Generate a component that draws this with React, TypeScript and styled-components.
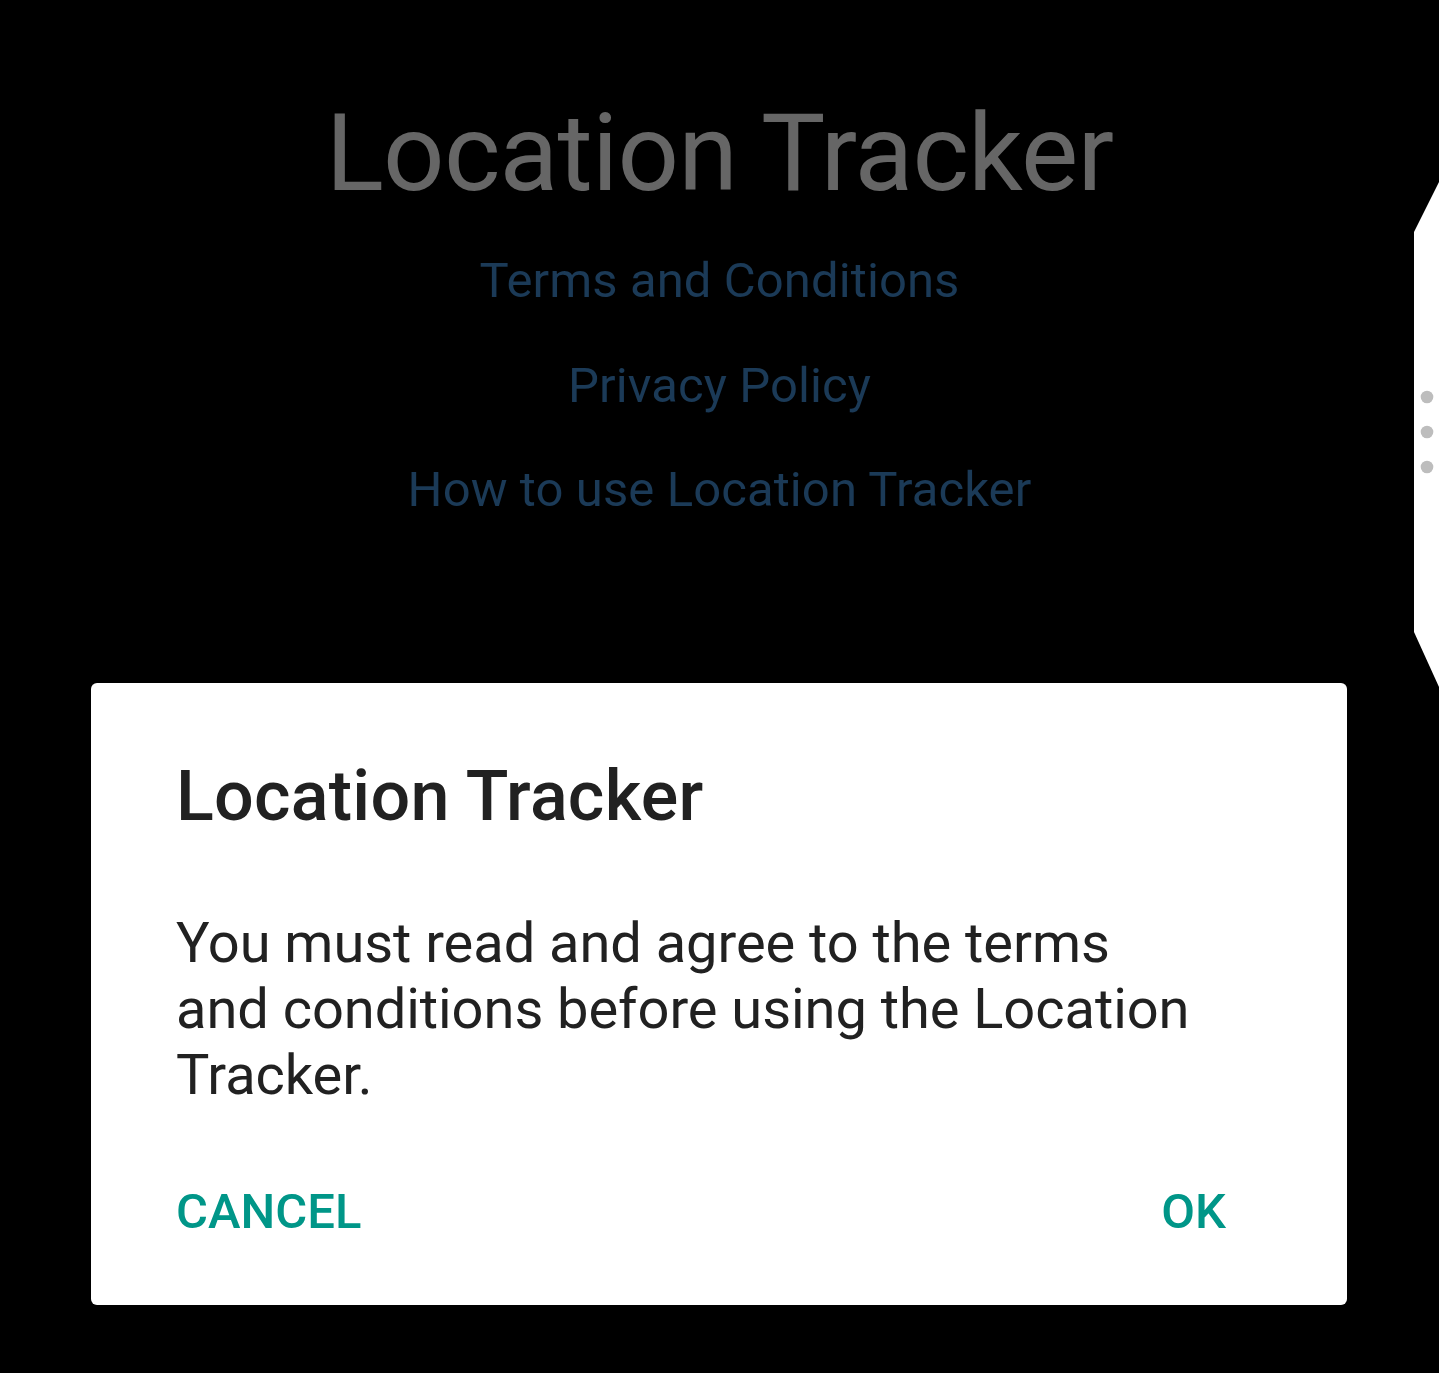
import React from "react";
import styled, { createGlobalStyle } from "styled-components";

const GlobalStyle = createGlobalStyle`
  html, body {
    margin: 0;
    padding: 0;
    background: #000;
  }
  body {
    font-family: Roboto, "Noto Sans", "Liberation Sans", sans-serif;
  }
`;

const Screen = styled.div`
  position: relative;
  width: 1439px;
  height: 1373px;
  overflow: hidden;
  background: #000;
  display: flex;
  flex-direction: column;
  align-items: center;
`;

const AppTitle = styled.h1`
  margin: 90px 0 0;
  font-size: 108px;
  font-weight: 400;
  letter-spacing: -0.8px;
  line-height: normal;
  color: #666666;
  white-space: nowrap;
`;

const LinkList = styled.nav`
  margin-top: 36px;
  display: flex;
  flex-direction: column;
  align-items: center;
  gap: 47.6px;
`;

const InfoLink = styled.a`
  font-size: 49px;
  font-weight: 400;
  letter-spacing: 0.1px;
  line-height: normal;
  color: #1b3a57;
  text-decoration: none;
  white-space: nowrap;
`;

const SideHandle = styled.svg`
  position: absolute;
  right: 0;
  top: 182px;
  width: 25px;
  height: 505px;
`;

const Scrim = styled.div`
  position: absolute;
  inset: 0;
  display: flex;
  justify-content: flex-start;
  align-items: flex-start;
  padding: 683px 0 0 91px;
  box-sizing: border-box;
`;

const Dialog = styled.div`
  width: 1256px;
  height: 622px;
  box-sizing: border-box;
  background: #ffffff;
  border-radius: 6px;
  padding: 72px 85px 0;
  display: flex;
  flex-direction: column;
`;

const DialogTitle = styled.h2`
  margin: 0;
  font-size: 70px;
  font-weight: 500;
  letter-spacing: 0.25px;
  line-height: normal;
  color: #212121;
`;

const DialogBody = styled.p`
  margin: 73px 0 0;
  font-size: 56px;
  font-weight: 400;
  letter-spacing: -0.05px;
  line-height: normal;
  color: #212121;
`;

const ButtonRow = styled.div`
  margin-top: 75px;
  padding-right: 36px;
  display: flex;
  justify-content: space-between;
  align-items: center;
`;

const TextButton = styled.button`
  border: none;
  background: none;
  padding: 0;
  margin: 0;
  font-family: inherit;
  font-size: 49px;
  font-weight: 500;
  line-height: normal;
  color: #009688;
  text-transform: uppercase;
  cursor: pointer;
`;

export default function App() {
  return (
    <>
      <GlobalStyle />
      <Screen>
        <AppTitle>Location Tracker</AppTitle>
        <LinkList>
          <InfoLink href="#">Terms and Conditions</InfoLink>
          <InfoLink href="#">Privacy Policy</InfoLink>
          <InfoLink href="#">How to use Location Tracker</InfoLink>
        </LinkList>

        <SideHandle viewBox="0 0 25 505">
          <polygon points="25,0 0,50 0,450 25,505" fill="#ffffff" />
          <circle cx="13" cy="215" r="6.3" fill="#bdbdbd" />
          <circle cx="13" cy="250" r="6.3" fill="#bdbdbd" />
          <circle cx="13" cy="285" r="6.3" fill="#bdbdbd" />
        </SideHandle>

        <Scrim>
          <Dialog role="dialog">
            <DialogTitle>Location Tracker</DialogTitle>
            <DialogBody>
              You must read and agree to the terms
              <br />
              and conditions before using the Location
              <br />
              Tracker.
            </DialogBody>
            <ButtonRow>
              <TextButton>Cancel</TextButton>
              <TextButton>OK</TextButton>
            </ButtonRow>
          </Dialog>
        </Scrim>
      </Screen>
    </>
  );
}
